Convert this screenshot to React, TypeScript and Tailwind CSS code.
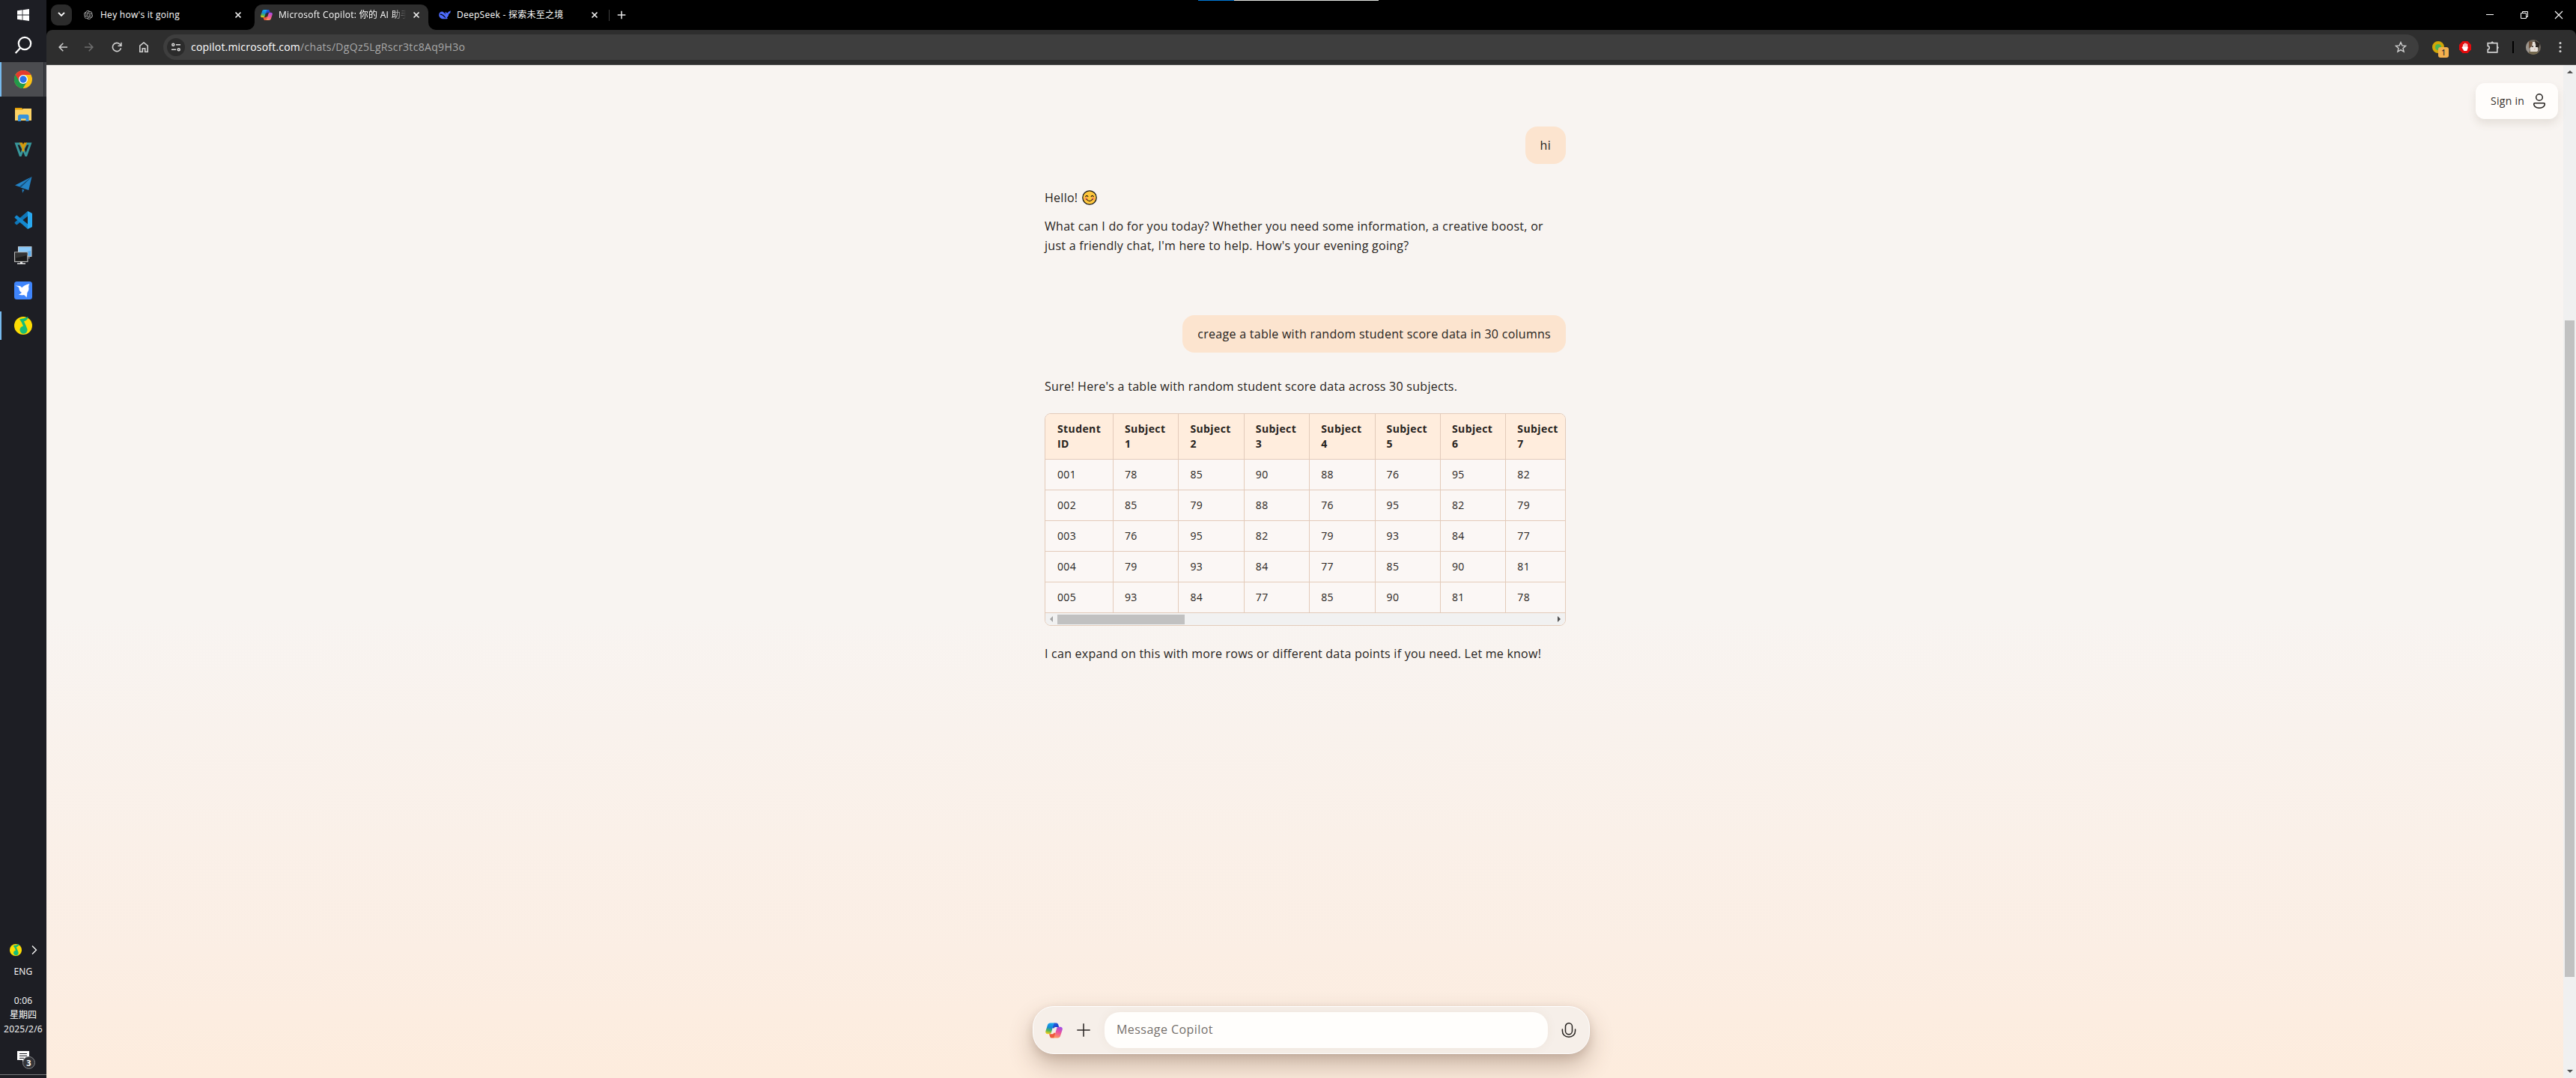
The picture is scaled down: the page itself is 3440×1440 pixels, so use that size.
import type { ReactNode } from 'react';
import { SiOpenai } from 'react-icons/si';

const UI_FONT = "font-['Open_Sans','Noto_Sans_CJK_SC',sans-serif]";

/* ---------- icons ---------- */

function CopilotLogo({ id, className }: { id: string; className?: string }) {
  return (
    <svg viewBox="0 0 24 24" className={className}>
      <defs>
        <linearGradient id={`${id}a`} x1="0.5" y1="0" x2="0.3" y2="1">
          <stop offset="0" stopColor="#1aa5ee" />
          <stop offset="0.4" stopColor="#1489d8" />
          <stop offset="0.7" stopColor="#4fb558" />
          <stop offset="1" stopColor="#ffcb12" />
        </linearGradient>
        <linearGradient id={`${id}b`} x1="0.7" y1="0" x2="0.4" y2="1">
          <stop offset="0" stopColor="#a04be8" />
          <stop offset="0.5" stopColor="#ee5698" />
          <stop offset="1" stopColor="#ff9860" />
        </linearGradient>
        <linearGradient id={`${id}c`} x1="0" y1="0" x2="1" y2="1">
          <stop offset="0" stopColor="#2368e0" />
          <stop offset="1" stopColor="#1a34c4" />
        </linearGradient>
      </defs>
      <path d="M12 1.500h3.200c1.300 0 2.200.8 2.600 2L19 7.200h-4.600c-1.300 0-2.200.6-2.600 1.900L9 8z" fill={`url(#${id}c)`} />
      <path d="M12 22.500H9c-1.500 0-2.200-.8-2.600-2L5.200 16.900h4.200c1.300 0 2.200-.7 2.600-1.900L15 16z" fill="#ee5a3c" />
      <path d="M6.900 1.500h6.700c-1.200.3-1.800 1.200-2.200 2.500L8.300 14.600c-.4 1.400-1.200 2.300-2.800 2.300H3.200C.7 16.900-.2 15 .4 12.900L3.100 4.400C3.700 2.600 5 1.500 6.900 1.500z" fill={`url(#${id}a)`} />
      <path d="M17.100 22.500h-6.700c1.200-.3 1.800-1.200 2.200-2.500l3.100-10.600c.4-1.400 1.200-2.300 2.800-2.300h2.300c2.500 0 3.400 1.900 2.800 4l-2.700 8.500c-.6 1.800-1.900 2.900-3.800 2.900z" fill={`url(#${id}b)`} />
    </svg>
  );
}

function ChromeLogo() {
  return (
    <svg viewBox="0 0 24 24" className="size-6">
      <circle cx="12" cy="12" r="12" fill="#fbc116" />
      <path d="M12 12 1.600 6A12 12 0 0 0 11.600 24L17.200 15z" fill="#219a4a" />
      <path d="M12 12V6h10.400A12 12 0 0 0 1.600 6l5.200 9z" fill="#e33b2e" />
      <path d="M1.600 6 6.800 15l5.200 3-.4 6A12 12 0 0 1 1.600 6z" fill="#219a4a" />
      <circle cx="12" cy="12" r="6" fill="#fff" />
      <circle cx="12" cy="12" r="4.700" fill="#2b73ea" />
    </svg>
  );
}

function ExplorerIcon() {
  return (
    <svg viewBox="0 0 24 20" className="h-5 w-6">
      <path d="M1 1h9l1.500 1.500V6H1z" fill="#e3a008" />
      <path d="M1 3.500h10l1-1.500h11v16H1z" fill="#fdd365" />
      <path d="M5 19v-7.500L7 10h11l1.500 1.500V19h-4v-3.500H9V19z" fill="#3793dc" />
    </svg>
  );
}

function WIcon() {
  return (
    <svg viewBox="0 0 24 20" className="h-5 w-6">
      <path d="M.5.500h7.300L12 9.500 16.200.5h7.300L17 19h-2.500L12 12.800 9.500 19H7z" fill="#38979b" />
      <path d="m4.500 3.500 4 10.500 1.700-4.500L7 3.500zM19.500 3.500l-4 10.500-1.700-4.500L17 3.500z" fill="#1d1e24" />
      <path d="M6.800.5h4L12 3l1.200-2.500h4L13.500 8v3.500L12 12.800l-1.500-1.300V8z" fill="#d69a0b" />
    </svg>
  );
}

function PlaneIcon() {
  return (
    <svg viewBox="0 0 24 22" className="h-[22px] w-6">
      <path d="M23.500 0 1 11.500l6 2z" fill="#2383c6" />
      <path d="M23.500 0 8.500 14.500l10.800 3.500z" fill="#2383c6" />
      <path d="M23.500 0 7 13.500l1.500 1z" fill="#155a8d" />
      <path d="m10.500 16.500 3 1.200-2.500 4z" fill="#2383c6" />
    </svg>
  );
}

function CodeIcon() {
  return (
    <svg viewBox="0 0 24 24" className="size-6">
      <path d="M18 0 1 14.800c-.6.600-.6 1.200 0 1.800l1.500 1.300c.5.400 1 .4 1.500 0L18 6.800z" fill="#0f76b8" />
      <path d="M18 24 1 9.200c-.6-.6-.6-1.200 0-1.800l1.500-1.300c.5-.4 1-.4 1.500 0L18 17.200z" fill="#1488ce" />
      <path d="M18 0l5.200 2.400c.5.300.8.700.8 1.300v16.600c0 .6-.3 1-.8 1.300L18 24z" fill="#29a9f0" />
    </svg>
  );
}

function MonitorsIcon() {
  return (
    <svg viewBox="0 0 24 24" className="size-6">
      <rect x="5.500" y=".7" width="17.500" height="12.800" fill="#5aaef0" stroke="#c9cfd4" strokeWidth="1" />
      <path d="M6 1.200h16.500V6L6 9z" fill="#8bc9f8" />
      <path d="M18 15h3v1h-3z" fill="#aaa" />
      <rect x=".6" y="8" width="17.300" height="12.500" fill="#1b1b1b" stroke="#b9b9b9" strokeWidth="1.200" />
      <path d="M1.200 8.600h16.200V12L1.200 16z" fill="#333" />
      <path d="M8 21h3v1.500h4V24H4v-1.500h4z" fill="#dedede" />
    </svg>
  );
}

function BirdIcon() {
  return (
    <svg viewBox="0 0 24 24" className="size-6">
      <rect width="24" height="24" rx="3.500" fill="#3f85fb" />
      <path d="M1.500 5.500 7.500 6c1 .3 1.800 1.300 2.700 2.300C12 6 15.500 4 20.500 3c-1.500 2.500-1.500 4.500-1 6.500-.2 2.500-1 4-2.200 5.400 0 3-.4 5-1 6.600-1-2-2-3-3.600-3.500-2.500.5-5 .3-7-.5 2-.5 3.500-1.500 4.200-2.700C7 13.500 6.500 11 6.400 8.500 5.500 6.800 3.500 6.300 1.500 5.500z" fill="#fff" />
    </svg>
  );
}

function MusicIcon({ className }: { className: string }) {
  return (
    <svg viewBox="0 0 24 24" className={className}>
      <circle cx="12" cy="12" r="12" fill="#fddc04" />
      <path d="M7 3.500C11 2.500 15 2 18.500 0 18.300 3 17 5 13 6.300c1.200 3 3 6 4 9.300a5 5 0 1 1-5-2.800c-1-3.200-2.700-6.200-5-9.300z" fill="#15bd78" />
    </svg>
  );
}

function CloseX({ className }: { className?: string }) {
  return (
    <svg viewBox="0 0 10 10" className={`size-2.5 ${className ?? ''}`} stroke="#eee" strokeWidth="1.700" fill="none">
      <path d="m1.500 1.500 7 7m0-7-7 7" />
    </svg>
  );
}

/* ---------- taskbar ---------- */

function TaskItem({ children, running }: { children: ReactNode; running?: boolean }) {
  return (
    <div className="relative flex h-[47px] w-full shrink-0 items-center justify-center">
      {running && <span className="absolute left-0 top-[5px] h-[38px] w-0.5 bg-[#76b9ed]" />}
      {children}
    </div>
  );
}

function Taskbar() {
  return (
    <aside className={`flex w-[62px] shrink-0 flex-col bg-[#1d1e24] text-xs tracking-[0.25px] text-white ${UI_FONT}`}>
      <div className="flex h-10 items-center justify-center">
        <svg viewBox="0 0 16 16" className="size-4" fill="#fff">
          <path d="M0 2.200 6.600 1.300v6.300H0zM7.400 1.200 16 0v7.600H7.400zM0 8.400h6.600v6.300L0 13.800zM7.400 8.400H16V16l-8.600-1.200z" />
        </svg>
      </div>
      <div className="flex h-[43px] items-start justify-center pt-2">
        <svg viewBox="0 0 24 24" className="size-6" fill="none" stroke="#fff" strokeWidth="2.200">
          <circle cx="14" cy="10" r="8.200" />
          <path d="m8.200 16-6.500 7" />
        </svg>
      </div>
      <div className="flex h-[46px] bg-[#3d3e43]">
        <div className="flex w-[58px] items-center border-l-2 border-[#76b9ed] bg-[#4b4c50] pl-[17px]">
          <ChromeLogo />
        </div>
        <div className="w-px bg-[#2b2c31]" />
      </div>
      <TaskItem><ExplorerIcon /></TaskItem>
      <TaskItem><WIcon /></TaskItem>
      <TaskItem><PlaneIcon /></TaskItem>
      <TaskItem><CodeIcon /></TaskItem>
      <TaskItem><MonitorsIcon /></TaskItem>
      <TaskItem><BirdIcon /></TaskItem>
      <TaskItem running><MusicIcon className="size-6" /></TaskItem>
      <div className="grow" />
      <div className="flex h-[18px] items-center pl-[13px]">
        <MusicIcon className="size-4" />
        <svg viewBox="0 0 8 12" className="ml-[13px] h-3 w-2" fill="none" stroke="#fff" strokeWidth="1.300">
          <path d="m1 .5 5.500 5.500L1 11.500" />
        </svg>
      </div>
      <div className="mt-[11px] text-center leading-[18px]">ENG</div>
      <div className="mt-5 flex flex-col text-center leading-[19px]">
        <span>0:06</span>
        <span className="tracking-normal">星期四</span>
        <span>2025/2/6</span>
      </div>
      <div className="mt-[19px] h-8 pl-[23px]">
        <div className="relative size-[25px]">
          <svg viewBox="0 0 25 25" className="size-full">
            <path d="M0 1h16v12H10l-3 3v-3H0z" fill="#fff" />
            <path d="M3 4.500h10M3 7.500h10M3 10.500h6" stroke="#1d1e24" />
            <circle cx="15.500" cy="16.500" r="8" fill="#333438" stroke="#85868a" />
          </svg>
          <span className="absolute left-[8px] top-[9px] w-[15px] text-center text-[11px] font-bold leading-[15px] tracking-normal">3</span>
        </div>
      </div>
      <div className="mb-1 h-px bg-[#77787b]" />
    </aside>
  );
}

/* ---------- browser chrome ---------- */

function TabStrip() {
  return (
    <div className="flex h-10 bg-black text-xs tracking-[0.27px] text-white">
      <div className="ml-1.5 mt-1.5 flex size-7 items-center justify-center rounded-[9px] bg-[#2b2b2b]">
        <svg viewBox="0 0 10 6" className="mb-0.5 h-1.5 w-2.5" fill="none" stroke="#fff" strokeWidth="1.900">
          <path d="m1 .8 4 4 4-4" />
        </svg>
      </div>
      <div className="flex w-[244px] items-center pl-4">
        <SiOpenai className="size-3 text-[#b4b4b4]" />
        <span className="ml-2.5 w-[170px] whitespace-nowrap">Hey how's it going</span>
        <CloseX className="ml-[9px]" />
      </div>
      <div className="relative mt-1.5 flex h-[34px] w-[232px] items-center rounded-t-[10px] bg-[#2e2e2e] pb-1.5 pl-2">
        <svg viewBox="0 0 10 10" className="absolute -left-2.5 bottom-0 size-2.5" fill="#2e2e2e">
          <path d="M10 0v10H0A10 10 0 0 0 10 0z" />
        </svg>
        <svg viewBox="0 0 10 10" className="absolute -right-2.5 bottom-0 size-2.5" fill="#2e2e2e">
          <path d="M0 0v10h10A10 10 0 0 1 0 0z" />
        </svg>
        <CopilotLogo id="tab" className="size-4" />
        <span className="ml-2 w-[171px] overflow-hidden whitespace-nowrap tracking-[0.3px] [mask-image:linear-gradient(to_right,black_152px,transparent_170px)]">
          Microsoft Copilot: 你的 AI 助手
        </span>
        <CloseX className="ml-2" />
      </div>
      <div className="flex w-[241px] items-center pl-3.5">
        <svg viewBox="0 0 16 12" className="h-3 w-4" fill="#4d6bfe">
          <path d="M9 1.800c.8.500 1.400 1 1.600 1.500.5.300 1 .2 1.300-.2C12.500 2 14 1.300 15.800.3c0 2.300-.6 3.900-2.500 4.200-.2 2.400-1.200 4-2.600 5.100l1.300 1.100c-1.400.7-2.800.7-4.200.5C3.600 12 .2 9.500.2 6 .2 3 2.200 1.300 5 1.600 5.700 2.500 7.500 2.500 9 5.500 8.500 3.800 8.400 2.600 9 1.800z" />
          <path d="M1.800 5.200c3-.5 5 2.300 7 4.300" stroke="#000" strokeWidth="1.100" fill="none" />
        </svg>
        <span className="ml-2 w-[170px] whitespace-nowrap">
          DeepSeek - 探索未至之境
        </span>
        <CloseX className="ml-[9px]" />
      </div>
      <div className="mt-[13px] h-[15px] w-px bg-[#3f3f3f]" />
      <svg viewBox="0 0 12 12" className="ml-2.5 mt-3.5 size-3" stroke="#e8e8e8" strokeWidth="1.500">
        <path d="M6 .7v10.600M.7 6h10.600" />
      </svg>
      <div className="grow" />
      <div className="flex w-[138px] items-center justify-around">
        <svg viewBox="0 0 12 12" className="size-3" stroke="#fff"><path d="M1 5.500h10" /></svg>
        <svg viewBox="0 0 12 12" className="size-3" stroke="#fff" fill="none">
          <path d="M1.500 3.500h7v7h-7zM3.500 3.500v-2h7v7h-2" />
        </svg>
        <svg viewBox="0 0 12 12" className="size-3" stroke="#fff" strokeWidth="1.100"><path d="m1 1 10 10M11 1 1 11" /></svg>
      </div>
    </div>
  );
}

function Toolbar() {
  return (
    <div className="bg-black">
      <div className="flex h-[47px] items-center rounded-t-lg border-b border-[#555] bg-[#2e2e2e]">
        <div className="flex w-[156px] shrink-0 items-center justify-between pl-4 pr-5">
          <svg viewBox="0 0 12 12" className="size-3" fill="none" stroke="#cfcfcf" strokeWidth="1.500"><path d="M12 6H1M6.300.8 1.100 6l5.200 5.200" /></svg>
          <svg viewBox="0 0 12 12" className="size-3" fill="none" stroke="#6f6f6f" strokeWidth="1.500"><path d="M0 6h11M5.700.8 10.900 6l-5.200 5.200" /></svg>
          <svg viewBox="0 0 14 14" className="size-3.5" fill="none" stroke="#cfcfcf" strokeWidth="1.600"><path d="M12.500 8.300A5.600 5.600 0 1 1 11 3l1.600 1.700M12.900.8v4.500H8.500" /></svg>
          <svg viewBox="0 0 12 14" className="h-3.5 w-3" fill="none" stroke="#cfcfcf" strokeWidth="1.600"><path d="M.8 5.200 6 .9l5.200 4.300v8H7.700V8.700H4.300v4.500H.8z" /></svg>
        </div>
        <div className="flex h-[34px] grow items-center rounded-full bg-[#3e3e3e] pl-[5px] pr-4">
          <span className="flex size-6 items-center justify-center rounded-full bg-[#2b2b2b]">
            <svg viewBox="0 0 12 12" className="size-3" fill="none" stroke="#ddd" strokeWidth="1.500">
              <circle cx="2.300" cy="2.700" r="1.500" />
              <path d="M6 2.700h6M0 9.300h6" />
              <circle cx="9.700" cy="9.300" r="1.500" />
            </svg>
          </span>
          <span className="ml-2 whitespace-nowrap text-sm tracking-[0.34px] text-[#a9a9a9]">
            <span className="tracking-[0.2px] text-white">copilot.microsoft.com</span>/chats/DgQz5LgRscr3tc8Aq9H3o
          </span>
          <div className="grow" />
          <svg viewBox="0 0 16 16" className="size-4" fill="none" stroke="#cfcfcf" strokeWidth="1.400">
            <path d="m8 1.500 1.900 4.400 4.700.4-3.600 3.100 1.100 4.700L8 11.600l-4.100 2.500L5 9.400 1.400 6.300l4.700-.4z" />
          </svg>
        </div>
        <div className="flex w-[210px] items-center pl-[18px]">
          <div className="relative size-4 rounded-full border-4 border-[#d0a708] bg-[#4db455]">
            <span className="absolute left-1 top-1 flex size-3.5 items-center justify-center rounded-[3px] bg-[#f3b04e] text-[10px] font-semibold leading-none text-[#333]">1</span>
          </div>
          <svg viewBox="0 0 16 16" className="ml-5 size-4">
            <path d="M4.700 0h6.600L16 4.700v6.600L11.300 16H4.700L0 11.300V4.700z" fill="#e30b0d" />
            <path d="M5.700 4.500v5L4.200 8.300M7.300 3v5M8.900 3v5M10.500 4.200v5.500M4.300 8.500l2.500 4h3l1.300-3.500V8H6z" stroke="#fff" strokeWidth="1.200" strokeLinecap="round" fill="#fff" />
          </svg>
          <svg viewBox="0 0 16 16" className="ml-[21px] size-4" fill="none" stroke="#cfcfcf" strokeWidth="1.700">
            <path d="M1.200 2.600h12.600v12.200H1.200v-3.600c2.800-.3 2.800-4.500 0-4.800z" />
            <path d="M5.800 2c.3-1.600 2.400-1.600 2.700 0zM14.300 7.200c1.500.3 1.500 2.400 0 2.700z" fill="#cfcfcf" strokeWidth=".8" />
          </svg>
          <div className="ml-[18px] h-4 w-0.5 bg-black" />
          <svg viewBox="0 0 20 20" className="ml-4 size-5">
            <defs><clipPath id="cat"><circle cx="10" cy="10" r="10" /></clipPath></defs>
            <g clipPath="url(#cat)">
              <rect width="20" height="20" fill="#6f665c" />
              <path d="M0 0h5v20H0z" fill="#9b958e" />
              <path d="m5 6 3 1 1-4 3 0 2 7 2 0 0 5-4 3-6-2z" fill="#e5ded8" />
              <path d="m4 2 5 1-1 6-4 3z" fill="#70543e" />
              <path d="m12 1 7 4-2 6-3-2z" fill="#2d2623" />
              <path d="M4 16h12v4H4z" fill="#756a50" />
              <circle cx="9" cy="9" r="1" fill="#382c28" />
              <circle cx="14" cy="9" r="1" fill="#110c0a" />
              <path d="m11 12 1.800 0-.9 1.400z" fill="#cc8b80" />
            </g>
          </svg>
          <svg viewBox="0 0 4 16" className="ml-6 h-4 w-1" fill="#d5d5d5">
            <circle cx="2" cy="2.500" r="1.500" /><circle cx="2" cy="8" r="1.500" /><circle cx="2" cy="13.500" r="1.500" />
          </svg>
        </div>
      </div>
    </div>
  );
}

/* ---------- chat ---------- */

const columns = ['Student ID', 'Subject 1', 'Subject 2', 'Subject 3', 'Subject 4', 'Subject 5', 'Subject 6', 'Subject 7'];
const rows = [
  ['001', '78', '85', '90', '88', '76', '95', '82'],
  ['002', '85', '79', '88', '76', '95', '82', '79'],
  ['003', '76', '95', '82', '79', '93', '84', '77'],
  ['004', '79', '93', '84', '77', '85', '90', '81'],
  ['005', '93', '84', '77', '85', '90', '81', '78'],
];

function ScoreTable() {
  return (
    <div className="h-[284px] w-[696px] overflow-hidden rounded-lg border border-[#e3cbba] bg-[#fbf7f5] text-sm">
      <div className="grid h-[61px] grid-cols-[90px_repeat(6,87.4px)_80px] border-b border-[#e3cbba] bg-[#ffeddd] font-bold leading-5 tracking-[0.4px]">
        {columns.map((c, i) => {
          const [name, n] = c.split(' ');
          return (
            <div key={c} className={`flex flex-col pt-2.5 ${i ? 'border-l border-[#e3cbba] pl-[15px]' : 'pl-4'}`}>
              <span>{name}</span>
              <span>{n}</span>
            </div>
          );
        })}
      </div>
      {rows.map((r) => (
        <div key={r[0]} className="grid h-[41px] grid-cols-[90px_repeat(6,87.4px)_80px] border-b border-[#e3cbba] leading-10 tracking-[0.35px]">
          {r.map((v, i) => (
            <div key={i} className={i ? 'border-l border-[#e3cbba] pl-[15px]' : 'pl-4'}>{v}</div>
          ))}
        </div>
      ))}
      <div className="flex h-4 items-center bg-[#f1f1f1]">
        <svg viewBox="0 0 4 8" className="ml-1.5 h-2 w-1" fill="#a3a3a3"><path d="M4 0v8L0 4z" /></svg>
        <div className="ml-1.5 h-[13px] w-[170px] bg-[#c1c1c1]" />
        <div className="grow" />
        <svg viewBox="0 0 4 8" className="mr-1.5 h-2 w-1" fill="#505050"><path d="M0 0v8l4-4z" /></svg>
      </div>
    </div>
  );
}

function SmileEmoji() {
  return (
    <svg viewBox="0 0 20 20" className="size-5">
      <circle cx="10" cy="10" r="9.200" fill="#ffc83d" stroke="#1c1c1c" strokeWidth="1.300" />
      <circle cx="5.200" cy="11.500" r="2" fill="#ff8f5a" />
      <circle cx="14.800" cy="11.500" r="2" fill="#ff8f5a" />
      <path d="M4.800 8.600c.5-1.600 2.500-1.600 3 0M12.200 8.600c.5-1.600 2.500-1.600 3 0M6 12c1.800 3.400 6.200 3.400 8 0" fill="none" stroke="#2a1c10" strokeWidth="1.200" strokeLinecap="round" />
    </svg>
  );
}

function Bubble({ children }: { children: ReactNode }) {
  return <div className="h-[50px] self-end whitespace-nowrap rounded-2xl bg-[#fce4cf] px-5 leading-[50px]">{children}</div>;
}

function Chat() {
  return (
    <div className="ml-[1333px] flex w-[696px] flex-col pt-[82px] text-base leading-[26px] tracking-[0.27px] text-[#272320]">
      <Bubble>hi</Bubble>
      <p className="mt-8 flex items-center gap-[6px]">Hello! <SmileEmoji /></p>
      <p className="mt-3 whitespace-nowrap">
        What can I do for you today? Whether you need some information, a creative boost, or
        <br />
        just a friendly chat, I'm here to help. How's your evening going?
      </p>
      <div className="mt-20 flex flex-col"><Bubble>creage a table with random student score data in 30 columns</Bubble></div>
      <p className="mb-[23px] mt-8">Sure! Here's a table with random student score data across 30 subjects.</p>
      <ScoreTable />
      <p className="mt-6 whitespace-nowrap tracking-[0.24px]">I can expand on this with more rows or different data points if you need. Let me know!</p>
    </div>
  );
}

function Composer() {
  return (
    <div className="absolute bottom-8 left-[1317px] flex h-16 w-[744px] items-center rounded-[28px] border border-white bg-[#f6efe9] pl-4 shadow-[0_16px_32px_rgba(90,60,40,0.30),0_4px_12px_rgba(90,60,40,0.14)]">
      <CopilotLogo id="bar" className="size-[23px]" />
      <svg viewBox="0 0 18 18" className="ml-[19px] size-[18px]" stroke="#272320" strokeWidth="1.500"><path d="M9 .3v17.400M.3 9h17.400" /></svg>
      <div className="ml-[19px] h-12 w-[592px] rounded-[20px] bg-[#fffefc] pl-4 text-base leading-[47px] tracking-[0.45px] text-[#75706c] shadow-[0_0_14px_rgba(120,80,50,0.06)]">
        Message Copilot
      </div>
      <svg viewBox="0 0 20 20" className="ml-[18px] size-5" fill="none" stroke="#272320" strokeWidth="1.500" strokeLinecap="round">
        <rect x="5.500" y=".8" width="9" height="15" rx="4.500" />
        <path d="M1.400 9v2c0 5 3.600 8.200 8.600 8.200s8.600-3.200 8.600-8.200V9" />
      </svg>
    </div>
  );
}

function SignIn() {
  return (
    <div className="absolute right-[7px] top-6 flex h-12 w-[110px] items-center rounded-xl bg-[#fffdfb] pl-5 text-sm font-medium tracking-[0.3px] text-[#33302e] shadow-[0_6px_12px_rgba(90,70,50,0.12)]">
      Sign in
      <svg viewBox="0 0 16 20" className="ml-3 h-5 w-4" fill="none" stroke="#272320" strokeWidth="1.500">
        <circle cx="8" cy="5" r="4.300" />
        <path d="M2.200 12.700h11.600c1 0 1.500.6 1.500 1.300 0 3.300-3.500 5.300-7.300 5.300S.7 17.300.7 14c0-.7.5-1.300 1.500-1.300z" />
      </svg>
    </div>
  );
}

export default function App() {
  return (
    <div className={`relative flex h-[1440px] w-[3440px] overflow-hidden ${UI_FONT}`}>
      <Taskbar />
      <div className="flex grow flex-col">
        <TabStrip />
        <Toolbar />
        <div className="relative flex grow">
          <main className="relative grow bg-[linear-gradient(to_bottom,#f8f4f1_0px,#f8f4f1_740px,#fbeee4_1180px,#fdecdd_1353px)]">
            <Chat />
            <SignIn />
          </main>
          <Composer />
          <div className="flex w-[17px] flex-col items-center bg-[#f0f0f0]">
            <svg viewBox="0 0 8 4" className="mt-[7px] h-1 w-2" fill="#505050"><path d="M0 4h8L4 0z" /></svg>
            <div className="mt-[330px] h-[877px] w-[13px] bg-[#c1c1c1]" />
            <div className="grow" />
            <svg viewBox="0 0 8 4" className="mb-[7px] h-1 w-2" fill="#505050"><path d="M0 0h8L4 4z" /></svg>
          </div>
        </div>
      </div>
      <div className="absolute left-[1600px] top-0 flex h-px w-[241px] bg-[#e4e6e2]">
        <div className="w-12 bg-[#0078d7]" />
      </div>
    </div>
  );
}
